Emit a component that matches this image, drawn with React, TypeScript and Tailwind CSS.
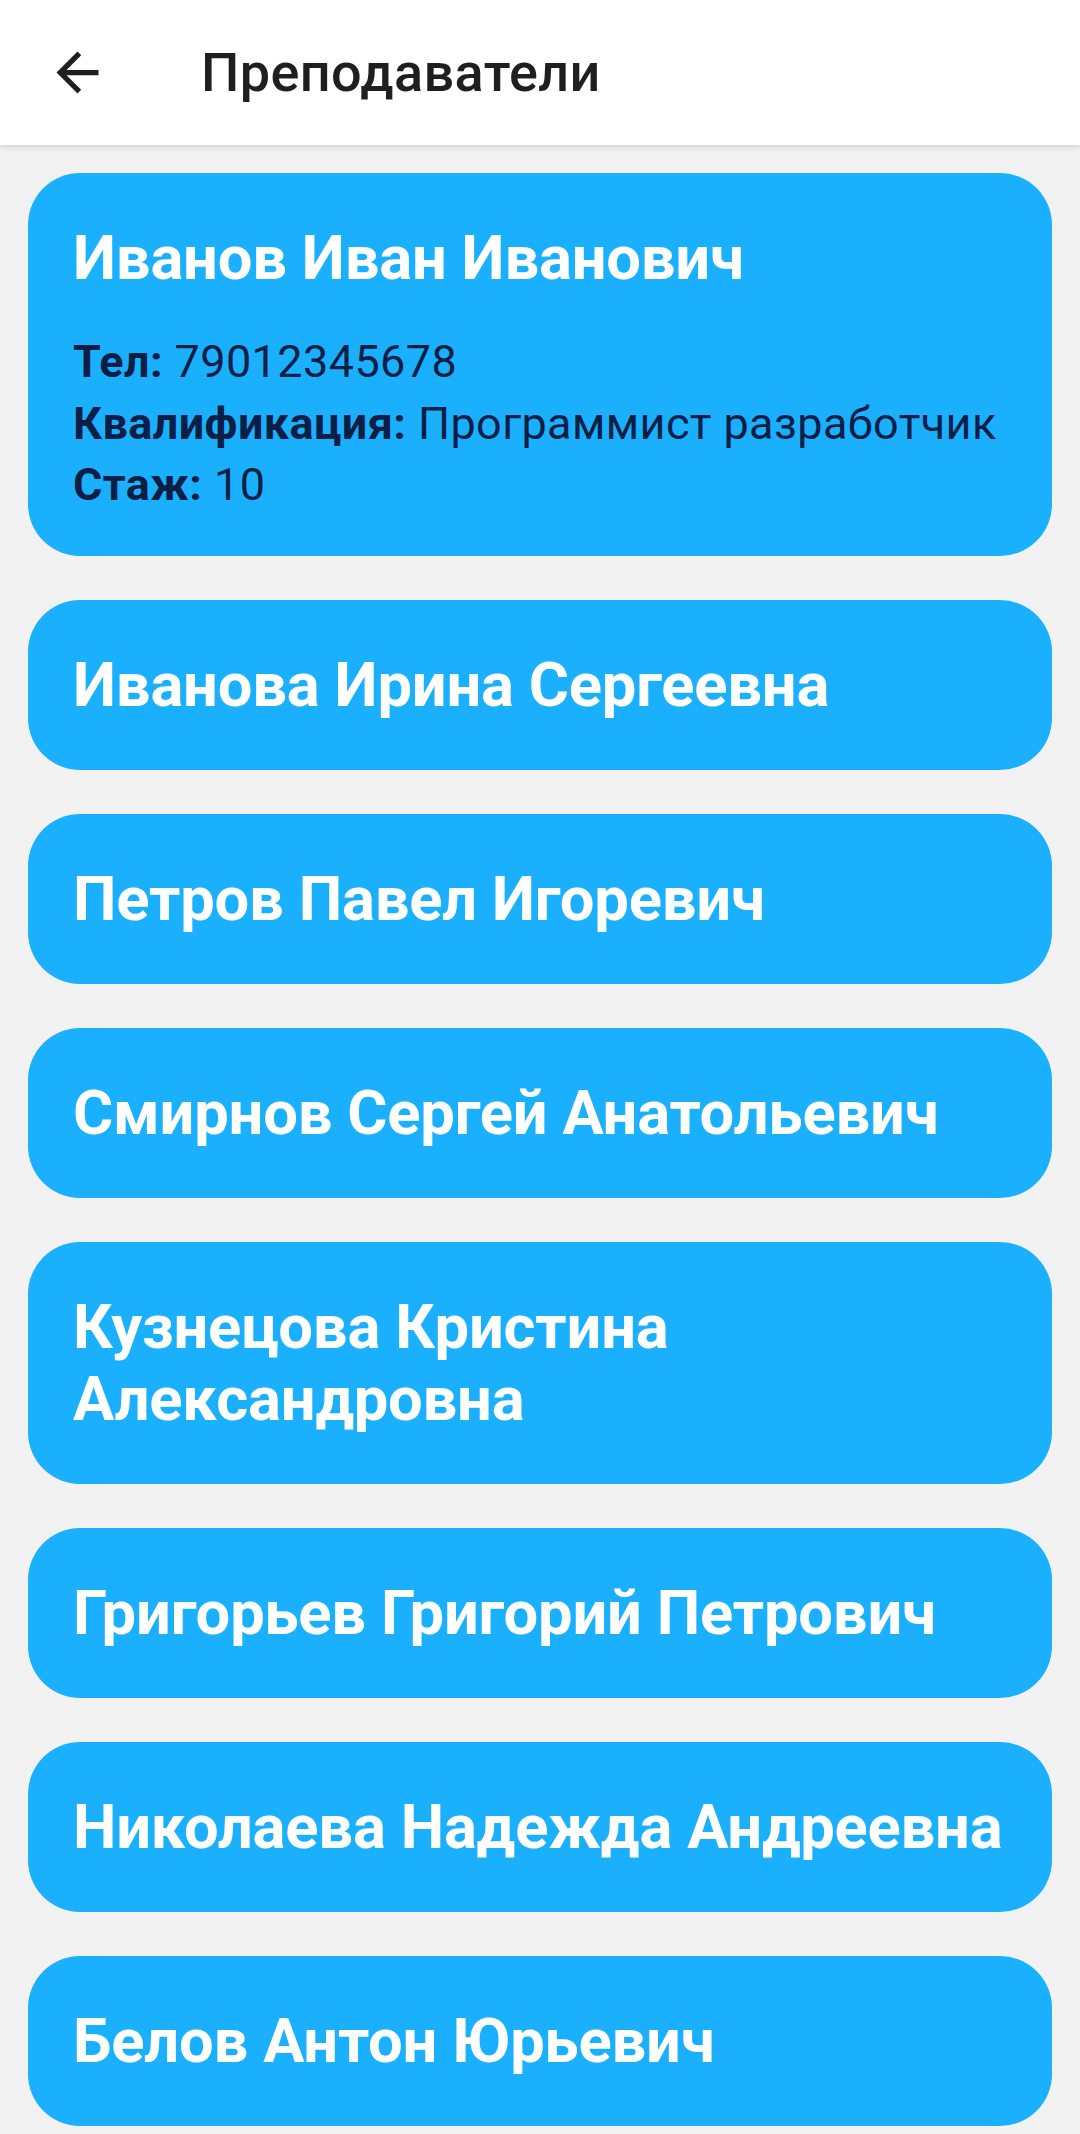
import React from "react";

const teachers = [
  "Иванова Ирина Сергеевна",
  "Петров Павел Игоревич",
  "Смирнов Сергей Анатольевич",
  "Кузнецова Кристина Александровна",
  "Григорьев Григорий Петрович",
  "Николаева Надежда Андреевна",
  "Белов Антон Юрьевич",
];

function BackArrow() {
  return (
    <svg width="63" height="63" viewBox="0 0 24 24" fill="#1f1f1f">
      <path d="M20 11H7.83l5.59-5.59L12 4l-8 8 8 8 1.41-1.41L7.83 13H20v-2z" />
    </svg>
  );
}

function Detail({ label, value }: { label: string; value: string }) {
  return (
    <div className="whitespace-nowrap text-[45px] leading-[61.5px] tracking-[0.4px] text-[#0b1e46]">
      <span className="font-bold">{label}</span> {value}
    </div>
  );
}

export default function App() {
  return (
    <div className="min-h-screen bg-[#f2f2f2] font-['Roboto',sans-serif]">
      <header className="relative z-10 flex h-[145px] items-center bg-white shadow-[0_2px_5px_rgba(0,0,0,0.14)]">
        <button className="ml-[46px] flex items-center">
          <BackArrow />
        </button>
        <h1 className="ml-[92px] text-[54px] font-medium tracking-[0.4px] text-[#1f1f1f]">Преподаватели</h1>
      </header>

      <main className="flex flex-col gap-[44px] px-[28px] pt-[28px] pb-[8px]">
        <div className="rounded-[52px] bg-[#1ab0fd] pl-[45px] pr-[36px] pt-[49px] pb-[40px]">
          <div className="text-[61.5px] leading-[72px] font-bold tracking-[-0.2px] text-white">Иванов Иван Иванович</div>
          <div className="mt-[37px]">
            <Detail label="Тел:" value="79012345678" />
            <Detail label="Квалификация:" value="Программист разработчик" />
            <Detail label="Стаж:" value="10" />
          </div>
        </div>

        {teachers.map((name) => (
          <div key={name} className="rounded-[52px] bg-[#1ab0fd] pl-[45px] pr-[36px] py-[49px]">
            <div className="text-[61.5px] leading-[72px] font-bold tracking-[-0.2px] text-white">{name}</div>
          </div>
        ))}
      </main>
    </div>
  );
}
